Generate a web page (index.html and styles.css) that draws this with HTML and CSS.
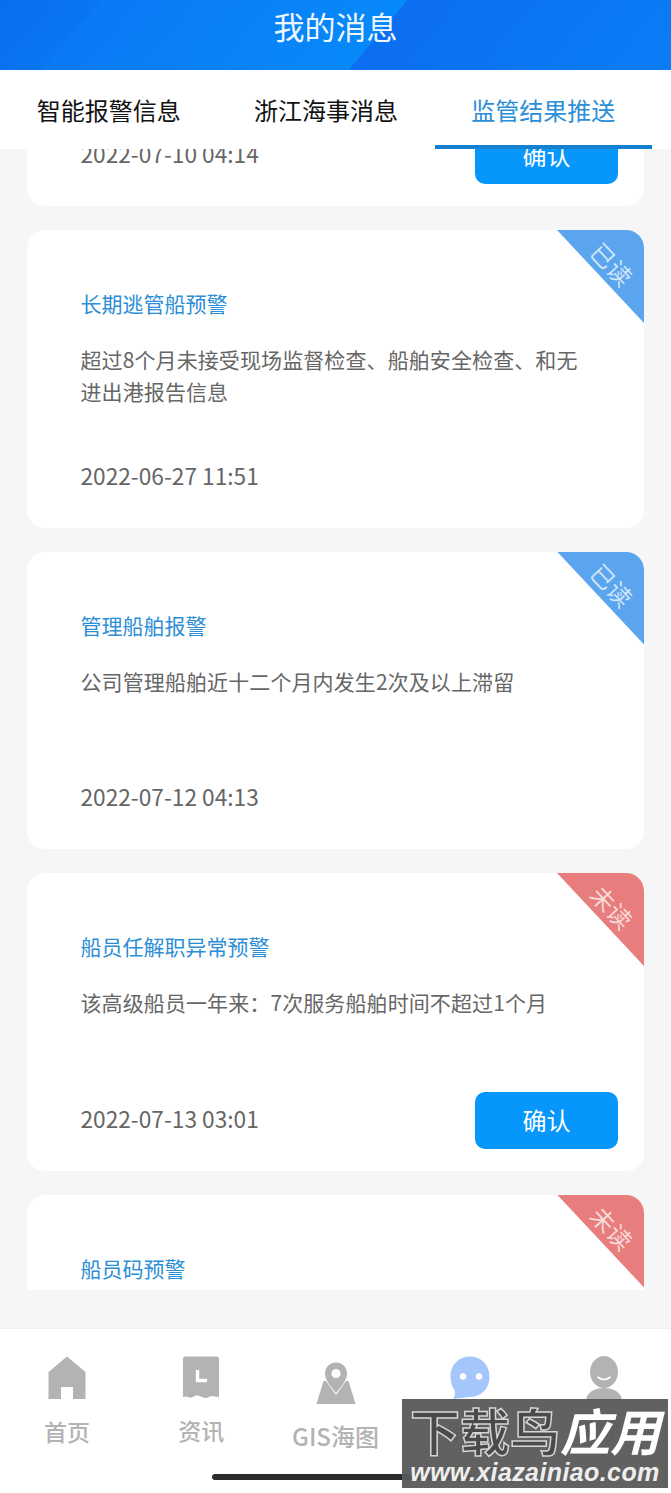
FILE: index.html
```html
<!DOCTYPE html>
<html lang="zh-CN">
<head>
<meta charset="utf-8">
<title>我的消息</title>
<link rel="stylesheet" href="styles.css">
</head>
<body>
<div class="app">
  <header class="header">我的消息</header>
  <nav class="tabs">
    <div class="tab">智能报警信息</div>
    <div class="tab">浙江海事消息</div>
    <div class="tab active">监管结果推送</div>
  </nav>
  <main class="list">
    <div class="track">
      <article class="card">
        <div class="foot"><span class="date">2022-07-10 04:14</span><button class="btn">确认</button></div>
      </article>
      <article class="card">
        <div class="badge read"><span>已读</span></div>
        <h3 class="title">长期逃管船预警</h3>
        <p class="desc">超过8个月未接受现场监督检查、船舶安全检查、和无进出港报告信息</p>
        <div class="foot"><span class="date">2022-06-27 11:51</span></div>
      </article>
      <article class="card">
        <div class="badge read"><span>已读</span></div>
        <h3 class="title">管理船舶报警</h3>
        <p class="desc">公司管理船舶近十二个月内发生2次及以上滞留</p>
        <div class="foot"><span class="date">2022-07-12 04:13</span></div>
      </article>
      <article class="card">
        <div class="badge unread"><span>未读</span></div>
        <h3 class="title">船员任解职异常预警</h3>
        <p class="desc">该高级船员一年来：7次服务船舶时间不超过1个月</p>
        <div class="foot"><span class="date">2022-07-13 03:01</span><button class="btn">确认</button></div>
      </article>
      <article class="card">
        <div class="badge unread"><span>未读</span></div>
        <h3 class="title">船员码预警</h3>
      </article>
    </div>
  </main>
  <div class="spacer"></div>
  <footer class="nav">
    <div class="item">
      <svg class="ico" width="38" height="44" viewBox="0 0 38 44"><path fill="#b3b3b3" d="M19 0.5 L37.5 16 V43 H25 V31 H13 V43 H0.5 V16 Z"/></svg>
      <span class="lab">首页</span>
    </div>
    <div class="item news">
      <svg class="ico" width="38" height="44" viewBox="0 0 38 44"><path fill="#b3b3b3" d="M3 0.5 H34 Q37 0.5 37 3.5 V41 L33 40.5 Q30 39.5 27 41 Q23 43 19 40.5 Q15 38.5 11 41 Q8 42.5 5 40.5 L1 41 V3.5 Q1 0.5 3 0.5 Z"/><path fill="none" stroke="#fff" stroke-width="3.4" d="M15.5 14 V24.5 H25"/></svg>
      <span class="lab">资讯</span>
    </div>
    <div class="item gis">
      <svg class="ico" width="40" height="44" viewBox="0 0 40 44"><path fill="#b3b3b3" d="M10 19 L20 33 L30 19 L32.5 19 L39.5 42 H0.5 L7.5 19 Z"/><path fill="#b3b3b3" fill-rule="evenodd" d="M20 0.5 C27 0.5 31 6 31 11.5 C31 18 25 25 20 31 C15 25 9 18 9 11.5 C9 6 13 0.5 20 0.5 Z M20 7 A4.6 4.6 0 1 0 20 16.2 A4.6 4.6 0 1 0 20 7 Z"/></svg>
      <span class="lab">GIS海图</span>
    </div>
    <div class="item">
      <svg class="ico" width="40" height="44" viewBox="0 0 40 44"><path fill="#a4c6fb" d="M20 0.5 C31 0.5 39.5 9 39.5 20.5 C39.5 33 31 41 20 41 L3 43 C5 40 5 38 5 35 C2 31 0.5 26 0.5 20.5 C0.5 9 9 0.5 20 0.5 Z"/><circle cx="13" cy="20.5" r="3.2" fill="#fff"/><circle cx="29" cy="20.5" r="3.2" fill="#fff"/></svg>
      <span class="lab">消息</span>
    </div>
    <div class="item">
      <svg class="ico" width="38" height="44" viewBox="0 0 38 44"><ellipse cx="19" cy="16" rx="14" ry="16" fill="#b3b3b3"/><path d="M12.5 21 Q19 26 25.5 21" fill="none" stroke="#fff" stroke-width="1.6"/><path fill="#b3b3b3" d="M1 44 C2 36 10 32 19 32 C28 32 36 36 37 44 Z"/></svg>
      <span class="lab">我的</span>
    </div>
  </footer>
  <div class="homebar"></div>
  <aside class="mark">
    <div class="mark-cn"><span class="outline">下载鸟</span><span class="solid">应用</span></div>
    <div class="mark-url">www.xiazainiao.com</div>
  </aside>
</div>
</body>
</html>
```
FILE: styles.css
```css
* { box-sizing: border-box; margin: 0; padding: 0; }
html, body { width: 671px; height: 1493px; overflow: hidden; }
body {
  background: #f6f6f6;
  font-family: "Noto Sans CJK SC", "Noto Sans", sans-serif;
}
.app { position: relative; width: 671px; height: 1493px; display: flex; flex-direction: column; }

.header {
  height: 70px;
  display: flex; align-items: center; justify-content: center;
  padding-bottom: 20px;
  color: #eef6ff;
  font-size: 31px;
  background: linear-gradient(130deg, #0a6eee 0, #0a75f2 77px, #0b79f4 77px, #0789f9 312px, #0c6ef0 312px, #0b7df6 559px);
}

.tabs { height: 79px; display: flex; background: #fff; padding: 0 19px 0 0; position: relative; z-index: 2; }
.tab {
  flex: 1;
  display: flex; align-items: center; justify-content: center;
  font-size: 24px; color: #111;
  padding-top: 4px;
  border-bottom: 4px solid transparent;
}
.tab.active { color: #2b8ed6; border-bottom-color: #1580cf; }

.list { height: 1141px; overflow: hidden; }
.track { display: flex; flex-direction: column; gap: 24px; padding: 0 27px 0 26.5px; margin-top: -240.5px; }
.card {
  position: relative;
  flex: none;
  height: 297.5px;
  background: #fff;
  border-radius: 18px;
  overflow: hidden;
  padding: 57px 27px 0 54px;
}
.title { font-size: 21px; font-weight: 400; line-height: 32px; color: #2b8ed6; }
.desc { margin-top: 24px; height: 64px; max-width: 512px; font-size: 21px; letter-spacing: .1px; line-height: 32px; color: #666; }
.foot {
  position: absolute; left: 54px; right: 26px; bottom: 22px; height: 57px;
  display: flex; align-items: center; justify-content: space-between;
}
.date { font-size: 22.7px; color: #666; padding-bottom: 4px; }
.btn {
  margin-left: auto;
  width: 143px; height: 57px;
  border: 0; border-radius: 10px;
  padding-bottom: 2px;
  background: #0796fb; color: #fff;
  font: 400 24px "Noto Sans CJK SC", sans-serif;
}

.badge {
  position: absolute; top: 0; right: 0;
  width: 87px; height: 93px;
  clip-path: polygon(0 0, 100% 0, 100% 100%);
  display: flex; align-items: center; justify-content: center;
}
.badge.read { background: #5aa5ee; }
.badge.unread { background: #e87d7d; }
.badge span {
  font-size: 24px; line-height: 1; color: rgba(255,255,255,.72);
  transform: translate(11px, -13px) rotate(47deg);
  white-space: nowrap;
}

.spacer { height: 38px; }
.nav { flex: 1; background: #fff; display: flex; border-top: 1px solid #efefef; }
.item { flex: 1; display: flex; flex-direction: column; align-items: center; padding-top: 27px; }
.gis { padding-top: 33px; }
.ico { display: block; flex: none; }
.lab { margin-top: 14px; font-size: 23px; line-height: 34px; font-weight: 500; color: #b3b3b3; white-space: nowrap; }
.news .lab { margin-top: 13px; }
.gis .lab { margin-top: 13px; font-size: 24px; }

.homebar {
  position: absolute; left: 212px; top: 1474px;
  width: 260px; height: 6px; border-radius: 3px; background: #2b2b2b;
}
.mark {
  position: absolute; left: 402px; top: 1399px;
  width: 266px; height: 89px;
  background: rgba(88,88,88,.95);
  display: flex; flex-direction: column; align-items: center;
  overflow: hidden;
}
.mark-cn { font-size: 50px; line-height: 56px; font-weight: 700; white-space: nowrap; margin-top: 2px; }
.outline { color: #4a4a4a; -webkit-text-stroke: 1.5px #d5d5d5; }
.solid { color: #fff; font-style: italic; }
.mark-url {
  font-family: "Liberation Sans", sans-serif;
  font-size: 25px; line-height: 30px; font-weight: 700; font-style: italic;
  color: #eee; white-space: nowrap; letter-spacing: .4px;
}
```
